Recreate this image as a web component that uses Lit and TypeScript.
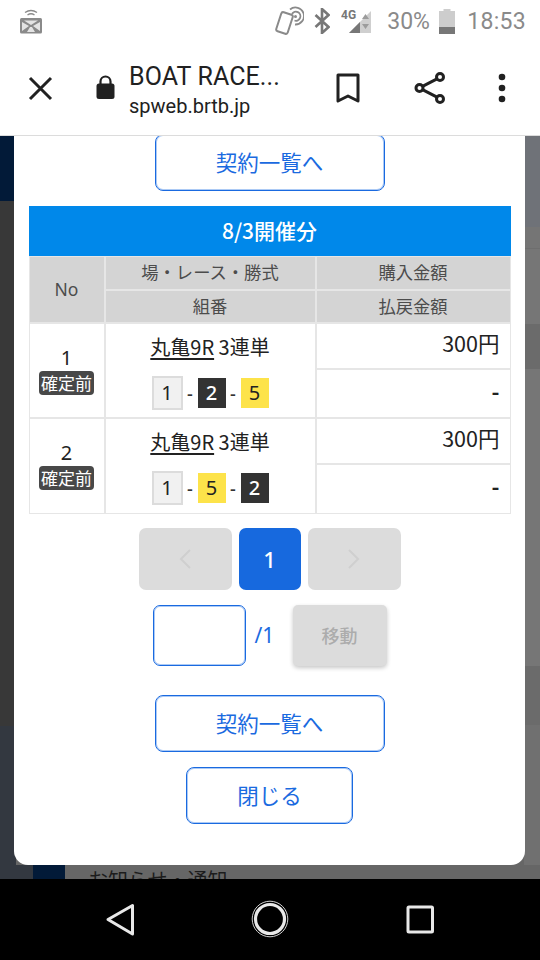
import { LitElement, html, css } from "lit";
import { customElement } from "lit/decorators.js";

@customElement("app-root")
export class AppRoot extends LitElement {
  static styles = css`
    :host { display: block; width: 540px; height: 960px; font-family: "Noto Sans CJK JP", "Noto Sans", sans-serif; }
    * { box-sizing: border-box; }
    .screen { width: 540px; height: 960px; display: flex; flex-direction: column; background: #fff; overflow: hidden; }

    .status { height: 44px; flex: none; display: flex; align-items: center; padding: 0 14px 2px 19px; color: #8a8a8a; font: 400 23px/1 Roboto, sans-serif; }
    .status .spacer { flex: 1; }
    .status svg { display: block; flex: none; }
    .pct { margin-left: 15px; width: 43px; }
    .batt { margin-left: 9px; }
    .time { margin-left: 12px; letter-spacing: 0.3px; }
    .bt { margin-left: 12px; }
    .sig { margin-left: 11px; }
    .nfc { margin-right: -2px; }

    .toolbar { height: 92px; flex: none; display: flex; align-items: center; padding-bottom: 3px; border-bottom: 1px solid #dcdcdc; color: #212121; }
    .toolbar svg { display: block; flex: none; }
    .tb-x { margin-left: 28px; }
    .tb-lock { margin-left: 43px; margin-top: -1px; }
    .titles { margin-left: 14px; width: 206px; display: flex; flex-direction: column; font-family: Roboto, sans-serif; margin-top: 5px; }
    .t1 { font-size: 25px; line-height: 30px; letter-spacing: 0.1px; }
    .t2 { font-size: 20px; line-height: 28px; }
    .tb-book { margin-left: 1px; }
    .tb-share { margin-left: 54px; }
    .tb-dots { margin-left: 52px; }

    .page { flex: 1; position: relative; overflow: hidden; background: #666; display: flex; flex-direction: column; }
    .bands { flex: 1; display: flex; justify-content: space-between; }
    .left-band { width: 16px; background: linear-gradient(#021a38 0 65px, #383838 65px 590px, #333840 590px); }
    .right-band { width: 16px; background: linear-gradient(#6f7278 0 91px, #757575 91px 112px, #6e6e6e 112px 113px, #767676 113px 188px, #6b6b6b 188px 233px, #767676 233px 530px, #6b6b6b 530px 589px, #707070 589px); }
    .foot { height: 14px; flex: none; display: flex; background: #666; overflow: hidden; }
    .foot .fa { width: 33px; background: #333840; }
    .foot .fb { width: 32px; background: #021a38; }
    .foot .fc { padding-left: 23px; font-size: 20px; line-height: 30px; color: #1c1c1c; white-space: nowrap; }

    .modal { position: absolute; left: 14px; right: 15px; top: -2px; bottom: 14px; background: #fff; border-radius: 0 0 14px 14px; display: flex; flex-direction: column; align-items: center; }

    .btn { display: flex; align-items: center; justify-content: center; height: 57px; padding-bottom: 3px; border: 1px solid #1a6ae0; box-shadow: inset 0 0 0 1px rgba(47, 122, 229, 0.4); border-radius: 8px; background: #fff; color: #1a6ae0; font-size: 21.5px; flex: none; }
    .btn.wide { width: 230px; }
    .btn.close { width: 167px; margin-top: 15px; }

    .tbl { width: 482px; margin-top: 15px; flex: none; }
    .ttl { height: 50px; padding-bottom: 3px; background: #0088ea; color: #fff; font-size: 21px; font-weight: 500; display: flex; align-items: center; justify-content: center; }
    .grid { display: grid; grid-template-columns: 74px 209px 193px; grid-template-rows: 32px 31px 44px 47px 44px 48px; gap: 2px; padding: 1px; background: #e6e6e6; }
    .h { background: #d4d4d4; color: #4c4c4c; font-size: 17.3px; padding-bottom: 3px; display: flex; align-items: center; justify-content: center; }
    .h.no { grid-row: span 2; font-family: "Noto Sans", sans-serif; font-size: 17.5px; padding-bottom: 2px; }
    .cell { background: #fff; color: #222; }
    .cell.num { grid-row: span 2; display: flex; flex-direction: column; align-items: center; justify-content: flex-start; padding-top: 22px; font: 400 20px/24px "Noto Sans", sans-serif; }
    .badge { margin-top: 1px; width: 55px; height: 24px; border-radius: 4px; background: #484848; color: #fff; font: 400 17px/23px "Noto Sans CJK JP", sans-serif; text-align: center; white-space: nowrap; }
    .cell.combo { grid-row: span 2; display: flex; flex-direction: column; align-items: center; padding-top: 7px; font-size: 20px; line-height: 32px; }
    .race u { text-underline-offset: 3px; }
    .chips { display: flex; align-items: center; height: 34px; margin-top: 13px; font: 400 20px/1 "Noto Sans", sans-serif; }
    .chip { width: 28px; height: 30px; display: flex; align-items: center; justify-content: center; }
    .chip.w { width: 31px; height: 34px; background: #f1f1f1; border: 2px solid #dcdcdc; color: #222; }
    .chip.k { background: #333; color: #fff; font-weight: 500; }
    .chip.y { background: #fde34a; color: #222; }
    .dash { width: 15px; text-align: center; font-size: 18px; color: #333; font-weight: 500; }
    .cell.amt { display: flex; justify-content: flex-end; padding: 1px 10px 0 0; font: 400 21.5px/36px "Noto Sans CJK JP", sans-serif; }
    .cell.amt.d { padding: 3px 10px 0 0; font-weight: 700; }

    .pager { margin-top: 14px; display: flex; gap: 7px; flex: none; }
    .pg { height: 62px; border-radius: 7px; display: flex; align-items: center; justify-content: center; }
    .pg.off { width: 93px; background: #dcdcdc; }
    .pg.on { width: 62px; background: #1769de; color: #fff; font: 500 22px/1 "Noto Sans", sans-serif; }

    .jump { margin-top: 15px; display: flex; align-items: center; flex: none; width: 234px; height: 61px; }
    .inp { width: 93px; height: 61px; border: 1px solid #1a6ae0; box-shadow: inset 0 0 0 1px rgba(47, 122, 229, 0.4); border-radius: 7px; background: #fff; }
    .of { width: 47px; padding-left: 9px; color: #1a6ae0; font: 400 21px/1 "Noto Sans", sans-serif; }
    .go { width: 94px; height: 61px; padding-bottom: 2px; border-radius: 5px; background: #dcdcdc; color: #acacac; font-size: 18px; font-weight: 500; display: flex; align-items: center; justify-content: center; box-shadow: 0 2px 4px rgba(0,0,0,0.22); }
    .btn.low { margin-top: 29px; }

    .nav { height: 81px; flex: none; background: #000; }
    .nav svg { display: block; }
  `;

  private row(n: string, chips: [string, string][]) {
    return html`
      <div class="cell num">${n}<div class="badge">確定前</div></div>
      <div class="cell combo">
        <div class="race"><u>丸亀9R</u> 3連単</div>
        <div class="chips">
          ${chips.map(([v, k], i) => html`${i ? html`<span class="dash">-</span>` : ""}<span class="chip ${k}">${v}</span>`)}
        </div>
      </div>
      <div class="cell amt">300円</div>
      <div class="cell amt d">-</div>
    `;
  }

  render() {
    return html`
      <div class="screen">
        <div class="status">
          <svg width="24" height="26" viewBox="0 0 24 26">
            <g fill="none" stroke="#8a8a8a" stroke-width="1.4">
              <path d="M6 4.500q6-4 12 0M8.500 7q3.500-2.400 7 0"/>
            </g>
            <rect x="1" y="10" width="22" height="15.500" rx="1.500" fill="#8a8a8a"/>
            <path d="M3 14l7 4-7 5zM21 14l-7 4 7 5zM5 12.500h14l-7 4.500zM11 19h2l3 5H8z" fill="#e4e4e4"/>
          </svg>
          <span class="spacer"></span>
          <svg class="nfc" width="29" height="30" viewBox="0 0 29 30" fill="none" stroke="#8a8a8a">
            <rect x="3.500" y="7" width="12" height="20" rx="2" stroke-width="2" transform="rotate(18 9.500 17)"/>
            <path d="M15 3.500a8.500 8.500 0 1 1 5 15" stroke-width="1.800"/>
            <path d="M17 8a4.500 4.500 0 1 1 2.500 6.500" stroke-width="1.800"/>
            <circle cx="20.500" cy="10.500" r="1.500" fill="#8a8a8a" stroke="none"/>
          </svg>
          <svg class="bt" width="16" height="26" viewBox="0 0 16 26" fill="none" stroke="#777" stroke-width="2.600">
            <path d="M1.500 7l13 12-6.500 6V1l6.500 6-13 12"/>
          </svg>
          <svg class="sig" width="31" height="26" viewBox="0 0 31 26">
            <text x="0" y="11" font-family="Roboto, sans-serif" font-size="12" font-weight="700" fill="#777">4G</text>
            <path d="M8 25L30 3v22z" fill="#cfcfcf"/>
            <path d="M8 25l11-11v11z" fill="#777"/>
            <path d="M21 11l3.500-5 3.500 5zM21 16h7l-3.500 5z" fill="#9c9c9c"/>
          </svg>
          <span class="pct">30%</span>
          <svg class="batt" width="16" height="25" viewBox="0 0 16 25">
            <path d="M4.500 0h7v2H16v23H0V2h4.500z" fill="#cdcdcd"/>
            <rect y="18" width="16" height="7" fill="#777"/>
          </svg>
          <span class="time">18:53</span>
        </div>

        <div class="toolbar">
          <svg class="tb-x" width="25" height="25" viewBox="0 0 25 25"><path d="M2 2l21 21M23 2L2 23" stroke="#212121" stroke-width="3" fill="none"/></svg>
          <svg class="tb-lock" width="19" height="25" viewBox="0 0 19 25">
            <path d="M4.500 9V6.500a5 5 0 0 1 10 0V9" fill="none" stroke="#212121" stroke-width="2.200"/>
            <rect x="0.500" y="8.500" width="18" height="15.500" rx="2.500" fill="#212121"/>
          </svg>
          <div class="titles"><span class="t1">BOAT RACE...</span><span class="t2">spweb.brtb.jp</span></div>
          <svg class="tb-book" width="24" height="31" viewBox="0 0 24 31"><path d="M2 2h20v26l-10-5-10 5z" fill="none" stroke="#212121" stroke-width="3" stroke-linejoin="round"/></svg>
          <svg class="tb-share" width="32" height="32" viewBox="0 0 32 32" fill="none" stroke="#212121" stroke-width="3">
            <circle cx="5.500" cy="16" r="3.500"/><circle cx="26" cy="5" r="3.500"/><circle cx="26" cy="27" r="3.500"/>
            <path d="M8.500 14.300L23 6.800M8.500 17.700L23 25.200"/>
          </svg>
          <svg class="tb-dots" width="8" height="30" viewBox="0 0 8 30" fill="#212121"><circle cx="4" cy="4" r="3.300"/><circle cx="4" cy="15" r="3.300"/><circle cx="4" cy="26" r="3.300"/></svg>
        </div>

        <div class="page">
          <div class="bands"><div class="left-band"></div><div class="right-band"></div></div>
          <div class="foot"><div class="fa"></div><div class="fb"></div><div class="fc">お知らせ・通知</div></div>
          <div class="modal">
            <div class="btn wide">契約一覧へ</div>
            <div class="tbl">
              <div class="ttl">8/3開催分</div>
              <div class="grid">
                <div class="h no">No</div>
                <div class="h">場・レース・勝式</div>
                <div class="h">購入金額</div>
                <div class="h">組番</div>
                <div class="h">払戻金額</div>
                ${this.row("1", [["1", "w"], ["2", "k"], ["5", "y"]])}
                ${this.row("2", [["1", "w"], ["5", "y"], ["2", "k"]])}
              </div>
            </div>
            <div class="pager">
              <div class="pg off"><svg width="14" height="22" viewBox="0 0 14 22"><path d="M12 2L3 11l9 9" fill="none" stroke="#cfcfcf" stroke-width="2"/></svg></div>
              <div class="pg on">1</div>
              <div class="pg off"><svg width="14" height="22" viewBox="0 0 14 22"><path d="M2 2l9 9-9 9" fill="none" stroke="#cfcfcf" stroke-width="2"/></svg></div>
            </div>
            <div class="jump"><div class="inp"></div><div class="of">/1</div><div class="go">移動</div></div>
            <div class="btn wide low">契約一覧へ</div>
            <div class="btn close">閉じる</div>
          </div>
        </div>

        <div class="nav">
          <svg width="540" height="81" viewBox="0 0 540 81" fill="none">
            <path d="M132.500 26.500v28.500L108 40.500z" stroke="#e8e8e8" stroke-width="3" stroke-linejoin="round"/>
            <circle cx="270" cy="40" r="17.800" stroke="#e8e8e8" stroke-width="0.900"/>
            <circle cx="270" cy="40" r="14.500" stroke="#e8e8e8" stroke-width="3.200"/>
            <rect x="408" y="28" width="24.500" height="25" rx="1" stroke="#e8e8e8" stroke-width="3"/>
          </svg>
        </div>
      </div>
    `;
  }
}
